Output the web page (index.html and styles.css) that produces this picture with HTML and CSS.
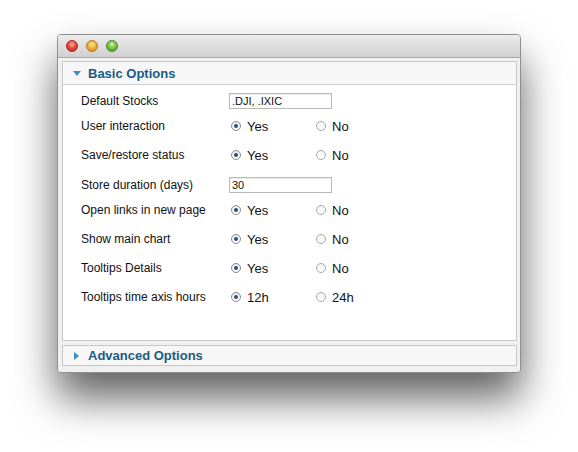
FILE: index.html
```
<!DOCTYPE html>
<html>
<head>
<meta charset="utf-8">
<link rel="stylesheet" href="styles.css">
</head>
<body>
<div class="window">
  <div class="titlebar">
    <span class="light red"></span>
    <span class="light yellow"></span>
    <span class="light green"></span>
  </div>
  <div class="content">
    <div class="panel">
      <div class="panel-head"><span class="tri-down"></span>Basic Options</div>
      <div class="panel-body">
        <div class="row row-input">
          <div class="label">Default Stocks</div>
          <div class="field"><span class="text-input">.DJI, .IXIC</span></div>
        </div>
        <div class="row">
          <div class="label">User interaction</div>
          <div class="field"><span class="opt"><span class="radio on"></span>Yes</span><span class="opt"><span class="radio"></span>No</span></div>
        </div>
        <div class="row">
          <div class="label">Save/restore status</div>
          <div class="field"><span class="opt"><span class="radio on"></span>Yes</span><span class="opt"><span class="radio"></span>No</span></div>
        </div>
        <div class="row row-input">
          <div class="label">Store duration (days)</div>
          <div class="field"><span class="text-input">30</span></div>
        </div>
        <div class="row">
          <div class="label">Open links in new page</div>
          <div class="field"><span class="opt"><span class="radio on"></span>Yes</span><span class="opt"><span class="radio"></span>No</span></div>
        </div>
        <div class="row">
          <div class="label">Show main chart</div>
          <div class="field"><span class="opt"><span class="radio on"></span>Yes</span><span class="opt"><span class="radio"></span>No</span></div>
        </div>
        <div class="row">
          <div class="label">Tooltips Details</div>
          <div class="field"><span class="opt"><span class="radio on"></span>Yes</span><span class="opt"><span class="radio"></span>No</span></div>
        </div>
        <div class="row">
          <div class="label">Tooltips time axis hours</div>
          <div class="field"><span class="opt"><span class="radio on"></span>12h</span><span class="opt"><span class="radio"></span>24h</span></div>
        </div>
      </div>
    </div>
    <div class="panel panel-closed">
      <div class="panel-head closed"><span class="tri-right"></span>Advanced Options</div>
    </div>
  </div>
</div>
</body>
</html>
```
FILE: styles.css
```
html, body {
  margin: 0;
  padding: 0;
  background: #ffffff;
}
body {
  font-family: "Liberation Sans", Arial, sans-serif;
  font-size: 12px;
  color: #111;
  padding: 34px 0 0 57px;
  height: 452px;
  box-sizing: border-box;
}
.window {
  width: 462px;
  height: 337px;
  border: 1px solid #8f8f8f;
  border-radius: 4px;
  background: #efefef;
  box-shadow: 0 25px 42px rgba(0, 0, 0, 0.62);
  overflow: hidden;
  display: flex;
  flex-direction: column;
}
.titlebar {
  height: 22px;
  flex: none;
  background: linear-gradient(#ececec, #d0d0d0);
  border-bottom: 1px solid #a8a8a8;
  display: flex;
  align-items: center;
  gap: 8px;
  padding-left: 8px;
}
.light {
  width: 12px;
  height: 12px;
  border-radius: 50%;
  box-sizing: border-box;
}
.red {
  background: radial-gradient(circle at 50% 35%, #ffb0a8 0%, #e94a3c 45%, #b3201a 100%);
  border: 1px solid #a32a22;
}
.yellow {
  background: radial-gradient(circle at 50% 35%, #ffe7a4 0%, #f0b23a 45%, #c67d12 100%);
  border: 1px solid #b07a20;
}
.green {
  background: radial-gradient(circle at 50% 35%, #d5f5a8 0%, #7bc448 45%, #3e8d1e 100%);
  border: 1px solid #4b8a2a;
}
.content {
  flex: 1;
  padding: 3px 3px 6px 4px;
  background: #f0f0f0;
  display: flex;
  flex-direction: column;
  gap: 4px;
}
.panel {
  border: 1px solid #c9c9c9;
  background: #ffffff;
}
.panel:first-child {
  flex: 1;
}
.panel-head {
  height: 22px;
  background: #f7f7f7;
  border-bottom: 1px solid #cfcfcf;
  display: flex;
  align-items: center;
  font-weight: bold;
  font-size: 13px;
  color: #1c5a82;
  padding-left: 10px;
}
.panel-head.closed {
  border-bottom: none;
  height: 19px;
}
.tri-down {
  width: 0;
  height: 0;
  border-left: 4px solid transparent;
  border-right: 4px solid transparent;
  border-top: 5px solid #3c8fba;
  margin-right: 7px;
  margin-top: 1px;
}
.tri-right {
  width: 0;
  height: 0;
  border-top: 4px solid transparent;
  border-bottom: 4px solid transparent;
  border-left: 5px solid #3c8fba;
  margin-right: 9px;
  margin-left: 1px;
}
.panel-body {
  padding: 2px 0 0 18px;
}
.row {
  display: flex;
  align-items: center;
  height: 29px;
  padding-bottom: 3px;
  box-sizing: border-box;
}
.row-input {
  height: 26px;
  padding-top: 2px;
  padding-bottom: 0;
}
.label {
  width: 148px;
  flex: none;
}
.field {
  display: flex;
  align-items: center;
}
.text-input {
  width: 99px;
  height: 14px;
  border: 1px solid #b9b9b9;
  box-shadow: inset 0 1px 1px rgba(0,0,0,0.08);
  font-size: 11px;
  line-height: 14px;
  padding-left: 2px;
  box-sizing: content-box;
}
.opt {
  display: flex;
  align-items: center;
  width: 85px;
  font-size: 13px;
}
.radio {
  width: 10px;
  height: 10px;
  border-radius: 50%;
  box-sizing: border-box;
  border: 1px solid #a9a9a9;
  background: linear-gradient(#f4f4f4, #ffffff);
  margin: 0 6px 0 2px;
  position: relative;
}
.radio.on {
  border-color: #8a8a8a;
  background: linear-gradient(#e8eef4, #ffffff);
}
.radio.on::after {
  content: "";
  position: absolute;
  left: 2px;
  top: 2px;
  width: 4px;
  height: 4px;
  border-radius: 50%;
  background: #2d4b73;
}
```
